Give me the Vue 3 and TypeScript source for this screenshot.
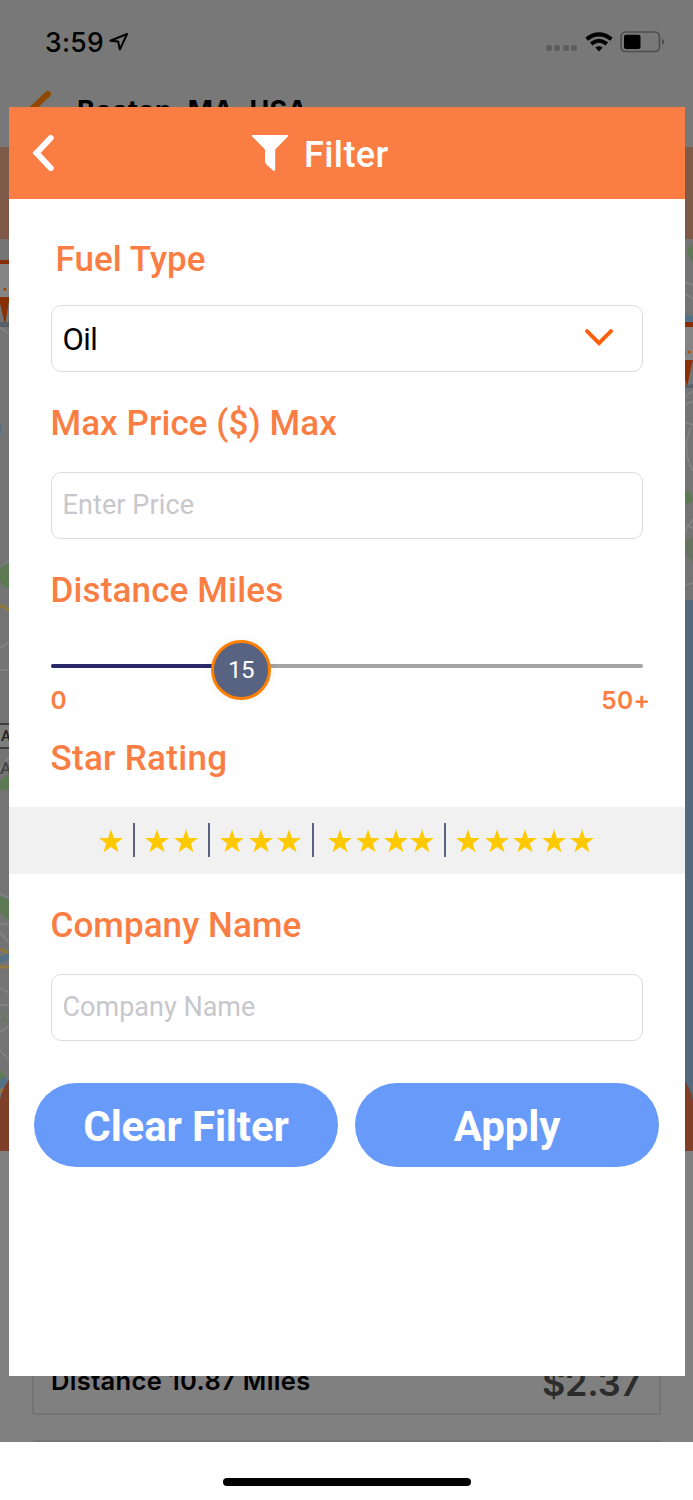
<script setup lang="ts">
import { ref } from 'vue'

interface StarGroup {
  count: number
  id: string
}

const fuelType = ref('Oil')
const price = ref('')
const company = ref('')
const distance = ref(15)
const groups: StarGroup[] = [
  { count: 1, id: 'one' },
  { count: 2, id: 'two' },
  { count: 3, id: 'three' },
  { count: 4, id: 'four' },
  { count: 5, id: 'five' },
]
</script>

<template>
  <div class="phone">
    <div class="screen">
      <div class="status">
        <span class="clock">3:59</span>
        <svg class="location" width="20" height="20" viewBox="0 0 20 20">
          <path d="M18 2 L1.4 8.8 L9.2 9.6 L10.8 17.6 Z" />
        </svg>
        <div class="signal"><i v-for="n in 4" :key="n"></i></div>
        <svg class="wifi" width="28" height="20" viewBox="0 0 28 20">
          <path d="M1.6 7.1 Q14 -2.4 26.4 7.1" />
          <path d="M6.2 11.9 Q14 5.6 21.8 11.9" />
          <path class="dot" d="M10.4 15.6 Q14 12.8 17.6 15.6 L14 19.5 Z" />
        </svg>
        <svg class="battery" width="46" height="22" viewBox="0 0 46 22">
          <rect class="case" x="1" y="1" width="38.5" height="19.5" rx="4.5" />
          <rect x="4" y="3.7" width="16.5" height="14.2" rx="2" />
          <path class="nub" d="M42 7.5 Q46.5 10.8 42 14.2 Z" />
        </svg>
      </div>
      <div class="appbar">
        <svg width="30" height="36" viewBox="0 0 30 36">
          <path d="M25 4 L10 18 L25 32" />
        </svg>
        <span>Boston, MA, USA</span>
      </div>
      <div class="band"></div>
      <svg class="map" width="693" height="912" viewBox="0 239 693 912">
        <rect y="239" width="693" height="912" fill="#747474" />
        <g fill="none" stroke="#858585" stroke-width="1.5">
          <path d="M0 282H9M0 327L9 334M0 570L9 560M0 648L9 642M0 670H9M0 770L9 757M0 894L9 898M0 924H9M0 932L9 943M0 988L9 993M0 1005H9M0 1032L9 1026M0 1050L9 1060" />
          <path d="M684 282L693 285M684 293L693 299M684 397L693 391M684 405L693 401M684 422L693 425M691 427Q681 450 693 471M684 533L693 519M686 524L693 529M684 585L693 583" />
        </g>
        <g fill="#5d7a55">
          <path d="M0 568L9 562V588Q2 588 0 580ZM0 896L9 899V920Q3 918 0 911ZM0 780L9 774V790H0ZM0 1010L9 1025L4 1020ZM0 1070L5 1075L0 1082Z" />
          <path d="M693 244L686 250L693 263ZM684 490L690 492L693 500L684 507Z" />
          <path d="M684 542L693 536V563L684 552Z" fill="#657461" />
        </g>
        <path d="M0 606Q5 606 9 611M0 949L9 953M0 967H9M0 1092L9 1087" fill="none" stroke="#92793c" stroke-width="3" />
        <path d="M0 957L9 953V960L0 963ZM0 1080L5 1076L9 1082L3 1088H0ZM0 423L2 431L0 435ZM684 314L693 316V322H684Z" fill="#547287" />
        <g>
          <path d="M0 264H9V297H0ZM684 326H693V360H684Z" fill="#858585" />
          <path d="M0 260H9V264H0ZM684 322H693V327H684Z" fill="#872c04" />
          <path d="M0 297H9V301L5 325L0 303ZM684 360H693L691 368L687 387L684 375Z" fill="#8a3005" />
          <path d="M0 322H9V327H0ZM684 386L693 384V388H684Z" fill="#555f67" />
          <circle cx="4.8" cy="289.3" r="1.5" fill="#a34805" />
          <circle cx="689.3" cy="352" r="1.5" fill="#b44f05" />
          <circle cx="684.6" cy="352" r="1.5" fill="#b44f05" />
        </g>
        <path d="M684 600H693V1151H684Z" fill="#53697d" />
        <path d="M-5 724H15V748H-5Z" fill="#7d7d7d" stroke="#2d2d2d" stroke-width="1.5" />
        <text x="1" y="741" class="sign">A</text>
        <text x="0" y="774" class="place">A</text>
        <path d="M9 1080Q2 1089 0 1100V1151H9ZM684 1080Q690 1087 693 1100V1151H684Z" fill="#7f3f28" />
      </svg>
      <div class="list">
        <div class="card">
          <span class="miles">Distance 10.87 Miles</span>
          <span class="cost">$2.37</span>
        </div>
        <div class="card next"></div>
      </div>
      <div class="home"><i></i></div>
    </div>

    <div class="modal">
      <header>
        <svg class="back" width="24" height="40" viewBox="0 0 24 40">
          <path d="M18.7 5 L4.5 20 L18.7 35" />
        </svg>
        <svg class="funnel" width="38" height="38" viewBox="0 0 38 38">
          <path d="M2 1H36Q38 1 36.6 2.7L24.2 15.5V35.2Q24 38 21.7 36.2L14.7 29.8Q14 29 14 28V15.5L1.4 2.7Q0 1 2 1Z" />
        </svg>
        <h1>Filter</h1>
      </header>

      <h2 class="fuel">Fuel Type</h2>
      <div class="field">
        <span class="value">{{ fuelType }}</span>
        <svg class="down" width="30" height="20" viewBox="0 0 30 20">
          <path d="M3 3.2 L15 15.2 L27 3.2" />
        </svg>
      </div>

      <h2 class="price">Max Price ($) Max</h2>
      <div class="field"><input v-model="price" class="enter" type="text" placeholder="Enter Price" /></div>

      <h2 class="distance">Distance Miles</h2>
      <div class="slider">
        <div class="track">
          <div class="fill"></div>
          <div class="thumb">{{ distance }}</div>
        </div>
        <div class="range"><span>0</span><span class="max">50+</span></div>
      </div>

      <h2 class="rating">Star Rating</h2>
      <div class="stars">
        <div v-for="g in groups" :key="g.id" class="group" :class="g.id">
          <svg v-for="n in g.count" :key="n" width="24" height="24" viewBox="0 0 24 24">
            <path d="M12 0.2L14.9 8.9L24 9.1L16.8 14.5L19.5 23.2L12 18L4.5 23.2L7.2 14.5L0 9.1L9.1 8.9Z" />
          </svg>
        </div>
      </div>

      <h2 class="company">Company Name</h2>
      <div class="field"><input v-model="company" type="text" placeholder="Company Name" /></div>

      <div class="actions">
        <button type="button" class="clear">Clear Filter</button>
        <button type="button">Apply</button>
      </div>
    </div>
  </div>
</template>

<style>
body {
  margin: 0;
  background: #fff;
}
</style>

<style scoped>
.phone {
  position: relative;
  width: 693px;
  height: 1500px;
  overflow: hidden;
  font-family: Roboto, "Liberation Sans", sans-serif;
}
.phone * {
  box-sizing: border-box;
}
svg {
  display: block;
  flex: none;
}
.screen {
  display: flex;
  flex-direction: column;
  height: 1500px;
  font-family: Inter, "Liberation Sans", sans-serif;
}
.status {
  display: flex;
  height: 84px;
  padding: 0 27.5px 0 45px;
  background: #787878;
}
.clock {
  width: 64px;
  padding-top: 26px;
  font-size: 26.5px;
  line-height: 32px;
  font-weight: 500;
  letter-spacing: 0.3px;
}
.location {
  margin-top: 32px;
  fill: none;
  stroke: #000;
  stroke-width: 2;
  stroke-linejoin: round;
}
.signal {
  display: flex;
  gap: 2.5px;
  margin: 45px 7.5px 0 auto;
}
.signal i {
  width: 6px;
  height: 6px;
  border-radius: 2px;
  background: #5e5e5e;
}
.wifi {
  margin: 31.5px 7px 0 0;
  fill: none;
  stroke: #000;
  stroke-width: 4;
}
.wifi .dot {
  fill: #000;
  stroke: none;
}
.battery {
  margin-top: 31px;
}
.battery .case {
  fill: none;
  stroke: #4d4d4d;
  stroke-width: 1.6;
}
.battery .nub {
  fill: #4d4d4d;
}
.appbar {
  display: flex;
  height: 63px;
  padding-left: 23px;
  background: #787878;
}
.appbar svg {
  margin-top: 6px;
  fill: none;
  stroke: #8f4800;
  stroke-width: 6;
  stroke-linecap: round;
}
.appbar span {
  margin: 11px 0 0 24px;
  font-size: 27px;
  line-height: 32px;
  font-weight: 700;
  letter-spacing: 0.45px;
}
.band {
  height: 92px;
  background: #7f5a48;
}
.sign,
.place {
  font: 500 15px Roboto, sans-serif;
  fill: #222;
}
.place {
  font-size: 17px;
  fill: #444;
}
.list {
  height: 291px;
  padding-left: 32px;
  background: #808080;
  overflow: hidden;
}
.card {
  display: flex;
  justify-content: space-between;
  width: 629px;
  height: 264px;
  padding: 213px 18px 0 17px;
  border: 2px solid #747474;
  border-radius: 3px;
}
.card.next {
  margin-top: 25px;
}
.miles {
  font-size: 25.5px;
  line-height: 30px;
  font-weight: 600;
  letter-spacing: 0.35px;
}
.cost {
  padding-top: 2px;
  font-size: 36px;
  line-height: 30px;
  font-weight: 600;
  letter-spacing: -0.2px;
  color: #2c2c2c;
}
.home {
  display: flex;
  justify-content: center;
  height: 58px;
  padding-top: 36px;
  background: #fff;
}
.home i {
  width: 248px;
  height: 8px;
  border-radius: 4px;
  background: #000;
}
.modal {
  position: absolute;
  left: 8.5px;
  top: 107.4px;
  width: 676px;
  height: 1268.4px;
  background: #fff;
}
header {
  display: flex;
  align-items: center;
  height: 91.6px;
  padding: 0 0 0 23px;
  background: #fa7e44;
}
.back {
  fill: none;
  stroke: #fff;
  stroke-width: 6;
  stroke-linecap: round;
}
.funnel {
  margin-left: 195px;
  fill: #fff;
}
h1 {
  margin: 3px 0 0 15.5px;
  font-size: 36px;
  line-height: 44px;
  font-weight: 500;
  letter-spacing: 0.4px;
  color: #fff;
}
h2 {
  height: 40px;
  margin: 0 0 0 42px;
  font-size: 35px;
  line-height: 40px;
  font-weight: 500;
  letter-spacing: 0.07px;
  color: #fa7e44;
}
h2.fuel {
  margin: 40.6px 0 25.4px 47px;
}
h2.price {
  margin-top: 31.6px;
  margin-bottom: 28.9px;
}
h2.distance {
  margin-top: 31.6px;
  margin-bottom: -0.6px;
  letter-spacing: 0.15px;
}
h2.rating {
  margin-top: 0.6px;
  margin-bottom: 28.4px;
  letter-spacing: 0.3px;
}
h2.company {
  margin-top: 32.1px;
  margin-bottom: 28.4px;
}
.field {
  display: flex;
  align-items: center;
  width: 592.5px;
  height: 67px;
  margin-left: 42px;
  padding-left: 11px;
  border: 1.4px solid #dcdcdc;
  border-radius: 10px;
}
.value {
  padding-top: 2px;
  font-size: 31px;
  letter-spacing: -0.6px;
}
.down {
  margin: 0 28.5px 0 auto;
  fill: none;
  stroke: #ff6010;
  stroke-width: 4;
  stroke-linecap: round;
}
input {
  width: 500px;
  padding: 0 0 2px;
  border: 0;
  outline: 0;
  background: none;
  font-family: Roboto, sans-serif;
  font-size: 27px;
  color: #000;
}
input::placeholder {
  color: #c7c7cc;
  opacity: 1;
}
.enter::placeholder {
  letter-spacing: 0.1px;
}
.slider {
  height: 127.5px;
  padding: 54px 0 0 42px;
}
.track {
  position: relative;
  width: 592px;
  height: 3.4px;
  border-radius: 2px;
  background: #a4a4a4;
}
.fill {
  width: 190px;
  height: 3.4px;
  border-radius: 2px;
  background: #29296b;
}
.thumb {
  position: absolute;
  left: 160.5px;
  top: -24.7px;
  width: 60px;
  height: 60px;
  border: 3.5px solid #ff8000;
  border-radius: 50%;
  background: #586381;
  box-shadow: 0 0 12px rgba(0, 0, 0, 0.06);
  color: #fff;
  font-size: 24px;
  line-height: 54px;
  letter-spacing: -0.4px;
  text-align: center;
}
.range {
  display: flex;
  justify-content: space-between;
  width: 600px;
  margin-top: 16px;
  font-family: Inter, sans-serif;
  font-size: 24.5px;
  line-height: 32px;
  font-weight: 600;
  color: #fa7e44;
}
.max {
  letter-spacing: 0.4px;
}
.stars {
  display: flex;
  align-items: center;
  height: 67px;
  padding-left: 90.2px;
  background: #f1f1f1;
}
.group {
  display: flex;
  align-items: center;
  gap: 4.4px;
  height: 34px;
  padding-top: 1px;
  fill: #ffc900;
}
.group + .group {
  margin-left: 10.35px;
  padding-left: 10.35px;
  border-left: 2px solid #586381;
}
.group.four {
  padding-left: 14px;
}
.group.four svg:last-child {
  margin-left: -3px;
}
.actions {
  display: flex;
  gap: 17px;
  margin: 42px 0 0 25.5px;
}
button {
  width: 304px;
  height: 83.5px;
  padding: 3px 0 0;
  border: 0;
  border-radius: 42px;
  background: #689afa;
  color: #fff;
  font-family: Roboto, sans-serif;
  font-size: 42px;
  font-weight: 700;
  letter-spacing: -0.15px;
}
</style>
